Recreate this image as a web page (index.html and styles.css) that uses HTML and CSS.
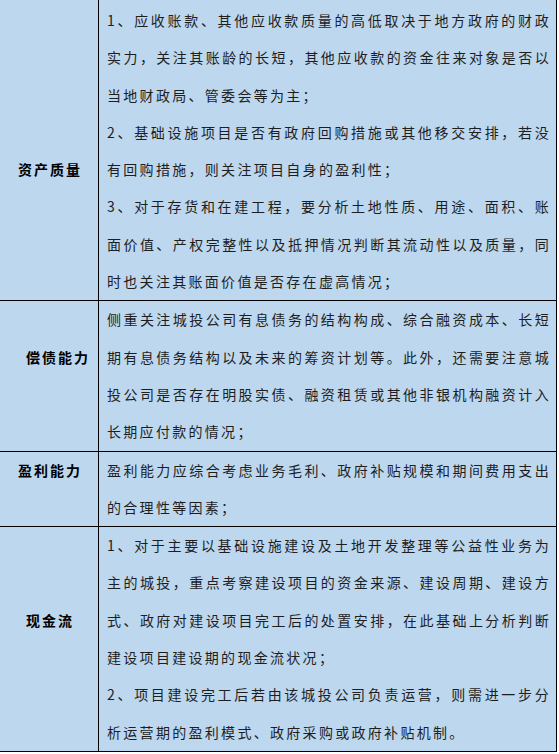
FILE: index.html
```html
<!DOCTYPE html>
<html lang="zh-CN">
<head>
<meta charset="utf-8">
<title>城投分析要点</title>
<link rel="stylesheet" href="styles.css">
</head>
<body>
<div class="table">
  <div class="row row-first">
    <div class="label"><span class="label-text at-line-5">资产质量</span></div>
    <div class="content">
      <div class="line j">1、应收账款、其他应收款质量的高低取决于地方政府的财政</div>
      <div class="line j">实力，关注其账龄的长短，其他应收款的资金往来对象是否以</div>
      <div class="line">当地财政局、管委会等为主；</div>
      <div class="line j">2、基础设施项目是否有政府回购措施或其他移交安排，若没</div>
      <div class="line">有回购措施，则关注项目自身的盈利性；</div>
      <div class="line j">3、对于存货和在建工程，要分析土地性质、用途、面积、账</div>
      <div class="line j">面价值、产权完整性以及抵押情况判断其流动性以及质量，同</div>
      <div class="line">时也关注其账面价值是否存在虚高情况；</div>
    </div>
  </div>
  <div class="row">
    <div class="label"><span class="label-text at-line-2 shifted">偿债能力</span></div>
    <div class="content">
      <div class="line j">侧重关注城投公司有息债务的结构构成、综合融资成本、长短</div>
      <div class="line j">期有息债务结构以及未来的筹资计划等。此外，还需要注意城</div>
      <div class="line j">投公司是否存在明股实债、融资租赁或其他非银机构融资计入</div>
      <div class="line">长期应付款的情况；</div>
    </div>
  </div>
  <div class="row">
    <div class="label"><span class="label-text at-line-1">盈利能力</span></div>
    <div class="content">
      <div class="line j">盈利能力应综合考虑业务毛利、政府补贴规模和期间费用支出</div>
      <div class="line">的合理性等因素；</div>
    </div>
  </div>
  <div class="row row-last">
    <div class="label"><span class="label-text at-line-3">现金流</span></div>
    <div class="content">
      <div class="line j">1、对于主要以基础设施建设及土地开发整理等公益性业务为</div>
      <div class="line j">主的城投，重点考察建设项目的资金来源、建设周期、建设方</div>
      <div class="line j">式、政府对建设项目完工后的处置安排，在此基础上分析判断</div>
      <div class="line">建设项目建设期的现金流状况；</div>
      <div class="line j">2、项目建设完工后若由该城投公司负责运营，则需进一步分</div>
      <div class="line">析运营期的盈利模式、政府采购或政府补贴机制。</div>
    </div>
  </div>
</div>
</body>
</html>
```

FILE: styles.css
```css
html, body {
  margin: 0;
  padding: 0;
  background: #ffffff;
}

body {
  font-family: "Noto Sans CJK SC", "Noto Sans", sans-serif;
  font-size: 14px;
  color: #1e1e1e;
}

.table {
  width: 557px;
  background: #bdd7ee;
  border-right: 1px solid #000000;
  border-bottom: 1px solid #000000;
  box-sizing: border-box;
}

.row {
  display: grid;
  grid-template-columns: 99px 1fr;
  border-bottom: 1px solid #000000;
}

.row-first {
  padding-top: 2px;
}

.row-last {
  border-bottom: none;
}

.label {
  border-right: 1px solid #000000;
  text-align: center;
  line-height: 37.3px;
}

.row-first .label {
  margin-top: -2px;
  padding-top: 2px;
}

.label-text {
  display: block;
  font-weight: 700;
  letter-spacing: 2px;
  color: #000000;
  padding-left: 2px;
}

.label-text.shifted {
  padding-left: 18px;
}

.at-line-1 { margin-top: 0; }
.at-line-2 { margin-top: 37.3px; }
.at-line-3 { margin-top: 74.6px; }
.at-line-5 { margin-top: 149.2px; }

.content {
  padding: 0 5px 0 8px;
}

.line {
  line-height: 37.3px;
  height: 37.3px;
  letter-spacing: 2.3px;
  white-space: nowrap;
  text-align: left;
}

.line.j {
  text-align: justify;
  text-align-last: justify;
  white-space: normal;
}
```
